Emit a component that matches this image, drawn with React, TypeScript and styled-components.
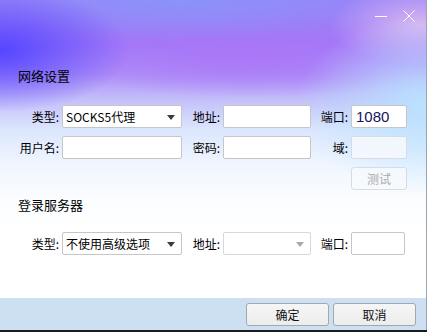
import React from "react";
import styled, { createGlobalStyle } from "styled-components";

const GlobalStyle = createGlobalStyle`
  body {
    margin: 0;
    padding: 0;
    background-color: #1c1c1e;
    font-family: "Noto Sans CJK SC", "Noto Sans", "Liberation Sans", sans-serif;
  }
`;

const Window = styled.div`
  width: 426px;
  height: 330px;
  border-right: 1px solid #9aa3b0;
  display: flex;
  flex-direction: column;
  color: #000;
  font-size: 12px;
  background:
    radial-gradient(130px 62px at 0px 50px, rgba(84, 70, 255, 1), rgba(84, 70, 255, 0) 100%),
    radial-gradient(130px 90px at 427px 105px, rgba(186, 226, 255, 1), rgba(186, 226, 255, 0) 100%),
    radial-gradient(90px 40px at 420px 25px, rgba(218, 186, 240, 0.95), rgba(218, 186, 240, 0) 100%),
    radial-gradient(220px 40px at 180px 0px, rgba(138, 148, 250, 0.95), rgba(138, 148, 250, 0) 100%),
    radial-gradient(200px 40px at 250px 58px, rgba(170, 118, 248, 0.9), rgba(170, 118, 248, 0) 100%),
    linear-gradient(
      180deg,
      #9a82f7 0px,
      #a278f8 45px,
      #b092f7 75px,
      #c4bffa 100px,
      #dce7fd 130px,
      #f0f6ff 165px,
      #fbfdff 200px,
      #ffffff 230px
    );
`;

const TitleBar = styled.div`
  height: 32px;
  display: flex;
  justify-content: flex-end;
  padding-right: 3px;
`;

const TitleButton = styled.div`
  width: 28px;
  height: 32px;
  display: flex;
  align-items: center;
  justify-content: center;
`;

const Heading = styled.div<{ $top: number; $bottom: number }>`
  margin: ${(p) => p.$top}px 0 ${(p) => p.$bottom}px 18px;
  font-size: 13px;
  line-height: 16px;
`;

const FormGrid = styled.div`
  display: grid;
  grid-template-columns: 62px 120px 41px 88px 40px 56px;
  grid-auto-rows: 23px;
  row-gap: 8px;
  align-items: center;
`;

const Label = styled.div`
  text-align: right;
  padding-right: 3px;
  line-height: 23px;
  white-space: nowrap;
`;

const Field = styled.div<{ $disabled?: boolean; $width?: number }>`
  box-sizing: border-box;
  height: 23px;
  width: ${(p) => (p.$width ? `${p.$width}px` : "100%")};
  border: 1px solid ${(p) => (p.$disabled ? "#d6dce4" : "#c6c6c6")};
  border-radius: 2px;
  background: ${(p) => (p.$disabled ? "rgba(246, 249, 253, 0.85)" : "#ffffff")};
  display: flex;
  align-items: center;
  padding-left: 3px;
`;

const Select = styled(Field)<{ $dim?: boolean }>`
  position: relative;
  border-color: ${(p) => (p.$dim ? "#d8d8d8" : "#c6c6c6")};
  &::after {
    content: "";
    position: absolute;
    right: 6px;
    top: 9px;
    border-left: 4px solid transparent;
    border-right: 4px solid transparent;
    border-top: 5px solid ${(p) => (p.$dim ? "#a9a9a9" : "#3c3c3c")};
  }
`;

const PortValue = styled.span`
  font-family: "Liberation Sans", Arial, sans-serif;
  font-size: 15px;
  color: #14145a;
  padding-left: 1px;
`;

const TestButton = styled.div`
  box-sizing: border-box;
  height: 23px;
  border: 1px solid #d6dce4;
  border-radius: 3px;
  background: rgba(248, 250, 253, 0.8);
  color: #ababab;
  display: flex;
  align-items: center;
  justify-content: center;
`;

const Footer = styled.div`
  margin-top: auto;
  height: 32px;
  box-sizing: border-box;
  background: #cde0f1;
  display: flex;
  justify-content: flex-end;
  align-items: flex-start;
  gap: 4px;
  padding: 5px 10px 0 0;
`;

const DialogButton = styled.div`
  box-sizing: border-box;
  width: 83px;
  height: 23px;
  border: 1px solid #a3a8ae;
  border-radius: 3px;
  background: linear-gradient(180deg, #f6f6f6, #ececec);
  display: flex;
  align-items: center;
  justify-content: center;
  color: #111;
`;

const Empty = styled.div``;

export default function App() {
  return (
    <>
      <GlobalStyle />
      <Window>
        <TitleBar>
          <TitleButton>
            <svg width="12" height="12" viewBox="0 0 12 12">
              <line x1="0" y1="6.5" x2="12" y2="6.5" stroke="#fff" strokeWidth="1" />
            </svg>
          </TitleButton>
          <TitleButton>
            <svg width="12" height="12" viewBox="0 0 12 12">
              <path d="M0.5 0.5 L11.5 11.5 M11.5 0.5 L0.5 11.5" stroke="#fff" strokeWidth="1" fill="none" />
            </svg>
          </TitleButton>
        </TitleBar>

        <Heading $top={36} $bottom={21}>网络设置</Heading>
        <FormGrid>
          <Label>类型:</Label>
          <Select>SOCKS5代理</Select>
          <Label>地址:</Label>
          <Field />
          <Label>端口:</Label>
          <Field>
            <PortValue>1080</PortValue>
          </Field>

          <Label>用户名:</Label>
          <Field />
          <Label>密码:</Label>
          <Field />
          <Label>域:</Label>
          <Field $disabled />

          <Empty />
          <Empty />
          <Empty />
          <Empty />
          <Empty />
          <TestButton>测试</TestButton>
        </FormGrid>

        <Heading $top={7} $bottom={19}>登录服务器</Heading>
        <FormGrid>
          <Label>类型:</Label>
          <Select>不使用高级选项</Select>
          <Label>地址:</Label>
          <Select $dim />
          <Label>端口:</Label>
          <Field $width={54} />
        </FormGrid>

        <Footer>
          <DialogButton>确定</DialogButton>
          <DialogButton>取消</DialogButton>
        </Footer>
      </Window>
    </>
  );
}
